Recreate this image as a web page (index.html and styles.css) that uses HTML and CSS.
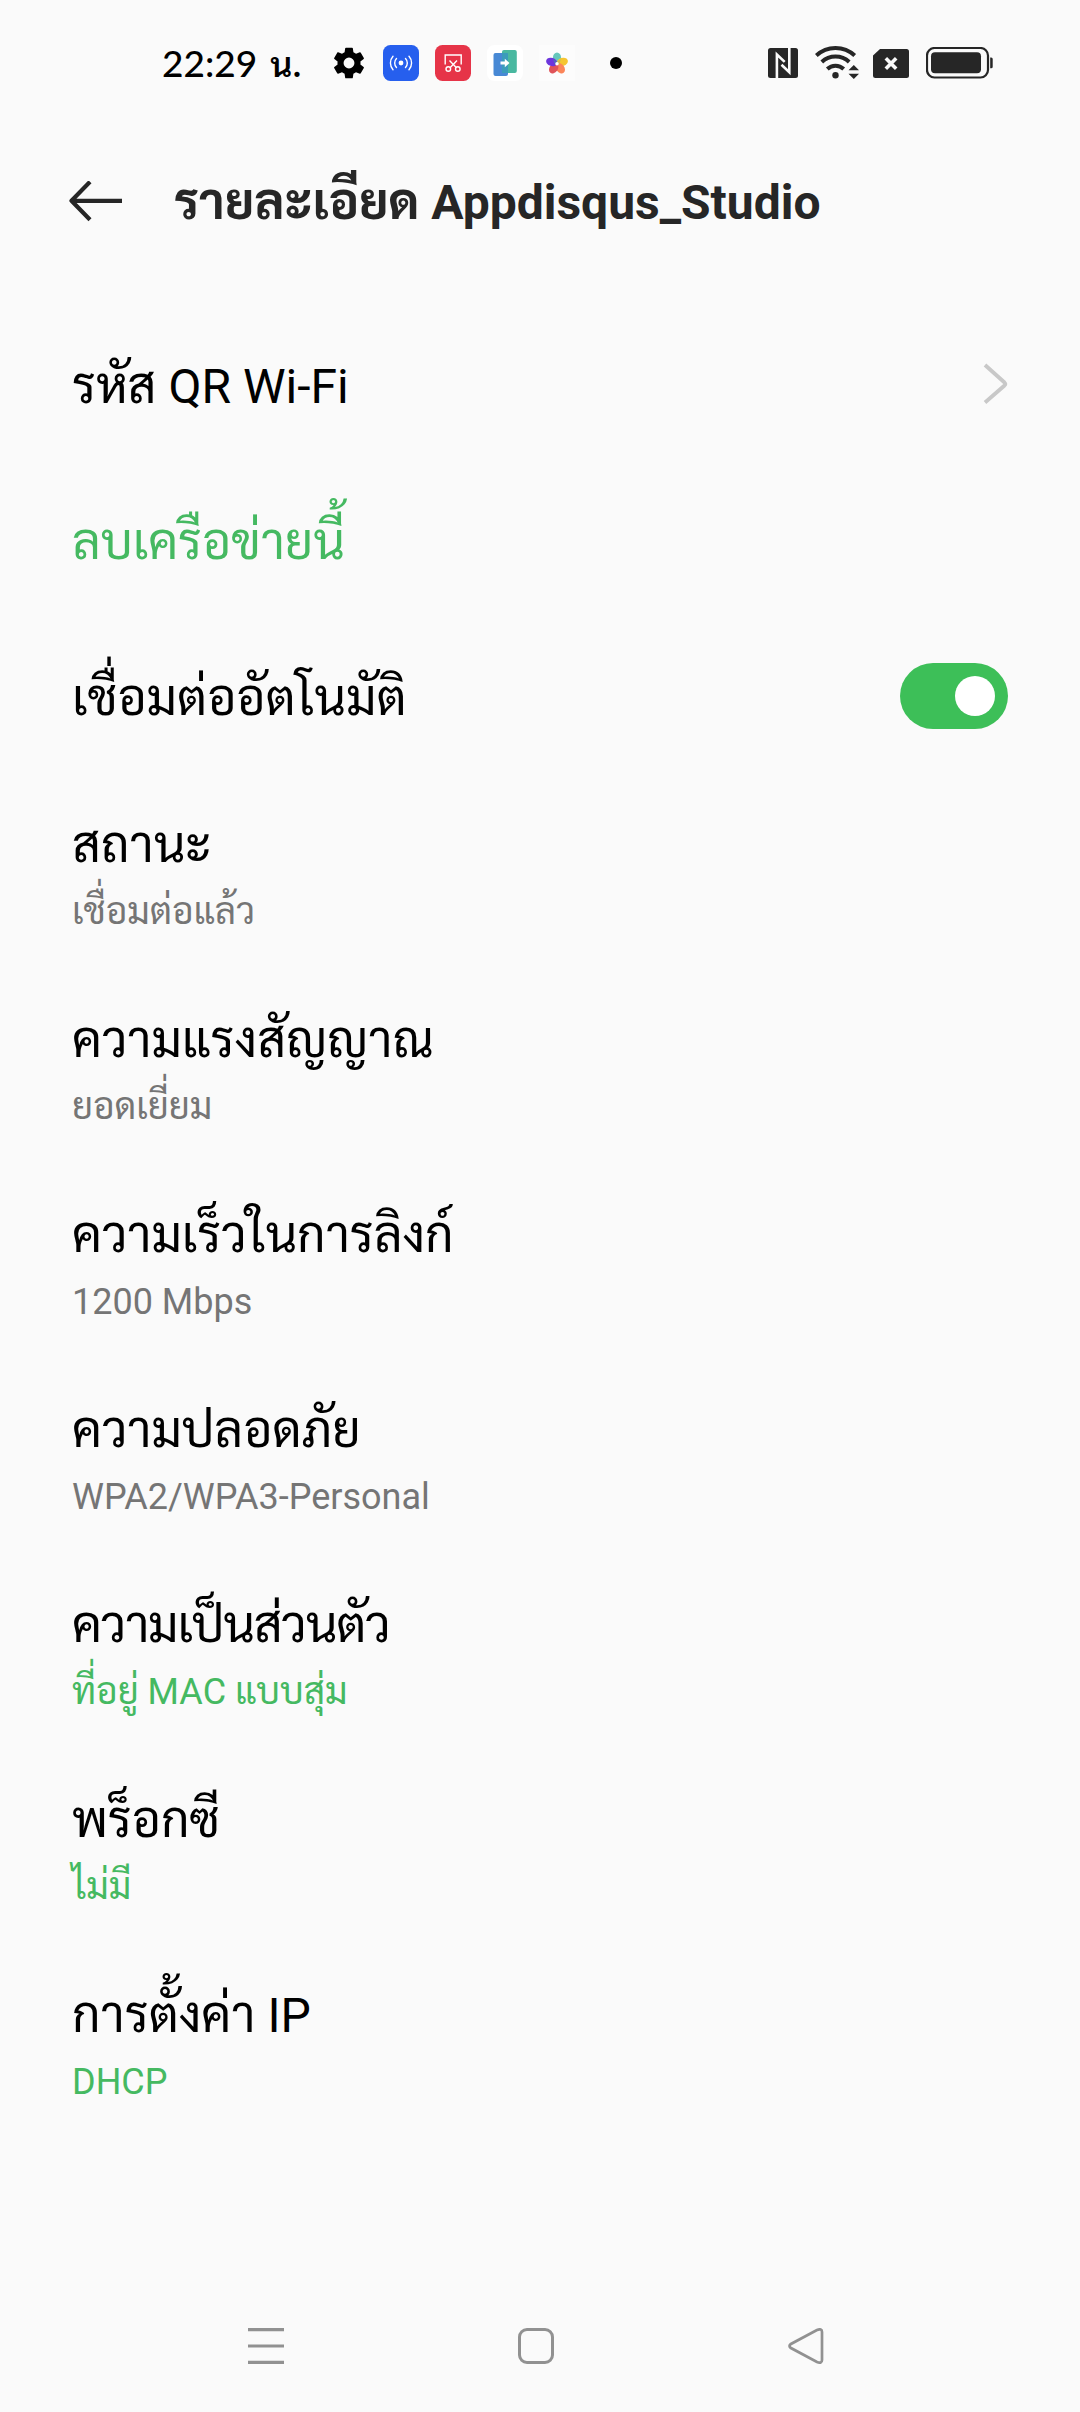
FILE: index.html
```html
<!DOCTYPE html>
<html lang="th">
<head>
<meta charset="utf-8">
<title>รายละเอียด Appdisqus_Studio</title>
<link rel="stylesheet" href="styles.css">
</head>
<body>
<header class="status">
  <div class="clock"><span>22:29</span><span class="unit">น.</span></div>
  <div class="notifications">
    <svg class="gear" width="32" height="32" viewBox="2 2 20 20"><path d="M19.14 12.94c.04-.3.06-.61.06-.94 0-.32-.02-.64-.07-.94l2.03-1.58a.49.49 0 0 0 .12-.61l-1.92-3.32a.488.488 0 0 0-.59-.22l-2.39.96c-.5-.38-1.03-.7-1.62-.94l-.36-2.54a.484.484 0 0 0-.48-.41h-3.84c-.24 0-.43.17-.47.41l-.36 2.54c-.59.24-1.13.57-1.62.94l-2.39-.96c-.22-.08-.47 0-.59.22L2.74 8.87c-.12.21-.08.47.12.61l2.03 1.58c-.05.3-.09.63-.09.94s.02.64.07.94l-2.03 1.58a.49.49 0 0 0-.12.61l1.92 3.32c.12.22.37.29.59.22l2.39-.96c.5.38 1.03.7 1.62.94l.36 2.54c.05.24.24.41.48.41h3.84c.24 0 .44-.17.47-.41l.36-2.54c.59-.24 1.13-.56 1.62-.94l2.39.96c.22.08.47 0 .59-.22l1.92-3.32c.12-.22.07-.47-.12-.61l-2.01-1.58zM12 15.4A3.4 3.4 0 1 1 12 8.6a3.4 3.4 0 0 1 0 6.8z"/></svg>
    <svg width="36" height="36" viewBox="0 0 36 36"><rect width="36" height="36" rx="7.5" fill="#265fee"/><circle cx="18" cy="18" r="2.400" fill="#fff"/><g fill="none" stroke="#fff" stroke-width="1.4" stroke-linecap="round"><path d="M13.500 13.500a6.500 6.500 0 0 0 0 9M22.500 13.500a6.500 6.500 0 0 1 0 9M10 11.300a10 10 0 0 0 0 13.400M26 11.300a10 10 0 0 1 0 13.400"/></g></svg>
    <svg width="36" height="36" viewBox="0 0 36 36"><rect width="36" height="36" rx="7.5" fill="#e63448"/><g fill="none" stroke="#fff" stroke-width="1.4"><path d="M10.200 19.500V10h16v9.500M14.500 15.500l6.700 7M22 15.500l-6.700 7"/><circle cx="13.300" cy="24" r="2.300"/><circle cx="22.800" cy="24" r="2.300"/></g></svg>
    <svg width="36" height="36" viewBox="0 0 36 36"><rect width="36" height="36" rx="7.5" fill="#fff"/><rect x="6.500" y="8" width="14.500" height="23" rx="2" fill="#4889d5"/><rect x="15" y="5" width="14.800" height="23" rx="2" fill="#49b8a0"/><path d="M15 8h6v20h-6z" fill="#3b9cba"/><path d="M13.500 16.500h4.300v-2.800l4.700 4.300-4.700 4.300v-2.800h-4.300z" fill="#fff"/></svg>
    <svg width="36" height="36" viewBox="0 0 36 36"><rect width="36" height="36" fill="#fcfcfc"/><g transform="translate(18 18.700)"><ellipse cy="-5.600" rx="4.100" ry="5.700" fill="#66c7bb"/><ellipse cy="-5.600" rx="4.100" ry="5.700" fill="#f5c531" transform="rotate(72)"/><ellipse cy="-5.600" rx="4.100" ry="5.700" fill="#fb8559" transform="rotate(144)"/><ellipse cy="-5.600" rx="4.100" ry="5.700" fill="#df5359" transform="rotate(216)"/><ellipse cy="-5.600" rx="4.100" ry="5.700" fill="#6c35dc" transform="rotate(288)"/><path d="M-4-4.500 0-2 1 1-2 1z" fill="#5267be"/><path d="M0-2 4-4.500 2 1-1 1z" fill="#c9be52"/><circle r="1.700" fill="#fff"/></g></svg>
    <span class="more"></span>
  </div>
  <div class="system">
    <svg class="nfc" width="30" height="30" viewBox="0 0 30 30"><rect width="30" height="30" rx="2.500" fill="#262626"/><path d="M8.900 30V6.500l7.800 7.400M21.300 0v24.200l-7.800-7.400" fill="none" stroke="#fafafa" stroke-width="2.600"/></svg>
    <svg class="wifi" width="44" height="34" viewBox="0 0 44 34"><g fill="none" stroke="#262626" stroke-width="4"><path d="M1.300 10.500a28 28 0 0 1 38.400 0M6.800 17a20 20 0 0 1 27.400 0M12.300 24a12 12 0 0 1 16.400 0"/></g><circle cx="20.500" cy="30.300" r="3.200" fill="#262626"/><path d="M38.800 17.500 46 27l-7 9-7-9z" fill="#fafafa"/><path d="M33.500 25.200 38.800 20l5.200 5.200zM33.500 28.800l5.300 5.200 5.200-5.200z" fill="#262626"/></svg>
    <svg class="sim" width="36" height="29" viewBox="0 0 36 29"><path d="M7 0h26.500A2.500 2.500 0 0 1 36 2.500v24a2.500 2.500 0 0 1-2.500 2.500h-31A2.500 2.500 0 0 1 0 26.500V6.500z" fill="#262626"/><path d="m12.800 9.300 10.400 10.400m0-10.400L12.800 19.700" stroke="#fafafa" stroke-width="3.600"/></svg>
    <svg class="battery" width="67" height="32" viewBox="0 0 67 32"><rect x="1" y="1" width="61" height="29.500" rx="7.500" fill="#fafafa" stroke="#262626" stroke-width="2.200"/><rect x="5" y="5.200" width="50" height="21" rx="4" fill="#262626"/><path d="M64.200 10.500h1a1.600 1.600 0 0 1 1.500 1.600v7.600a1.600 1.600 0 0 1-1.500 1.600h-1z" fill="#262626"/></svg>
  </div>
</header>
<nav class="appbar">
  <svg width="54" height="42" viewBox="0 1 54 42"><path d="M21 1.800 2.500 20.800 21 39.800M2.500 20.800H53" fill="none" stroke="#262626" stroke-width="4.200" stroke-linejoin="round"/></svg>
  <h1 class="heading"><span class="thai">รายละเอียด </span>Appdisqus_Studio</h1>
</nav>
<main class="settings">
  <div class="row"><span class="label"><span class="thai">รหัส </span>QR Wi-Fi</span><svg class="chevron" width="25" height="42" viewBox="0 0 25 42"><path d="M2 2 21.500 19.500q1.500 1.500 0 3L2 39.500" fill="none" stroke="#c8c8c8" stroke-width="3.800"/></svg></div>
  <div class="row"><span class="label action"><span class="thai">ลบเครือข่ายนี้</span></span></div>
  <div class="row"><span class="label"><span class="thai">เชื่อมต่ออัตโนมัติ</span></span><span class="switch"><span class="knob"></span></span></div>
  <div class="item"><div class="label"><span class="thai">สถานะ</span></div><div class="value"><span class="thai">เชื่อมต่อแล้ว</span></div></div>
  <div class="item"><div class="label"><span class="thai">ความแรงสัญญาณ</span></div><div class="value"><span class="thai">ยอดเยี่ยม</span></div></div>
  <div class="item"><div class="label"><span class="thai">ความเร็วในการลิงก์</span></div><div class="value">1200 Mbps</div></div>
  <div class="item"><div class="label"><span class="thai">ความปลอดภัย</span></div><div class="value">WPA2/WPA3-Personal</div></div>
  <div class="item"><div class="label"><span class="thai tight">ความเป็นส่วนตัว</span></div><div class="value action"><span class="thai">ที่อยู่ </span>MAC<span class="thai"> แบบสุ่ม</span></div></div>
  <div class="item"><div class="label"><span class="thai">พร็อกซี</span></div><div class="value action"><span class="thai">ไม่มี</span></div></div>
  <div class="item"><div class="label"><span class="thai">การตั้งค่า </span>IP</div><div class="value action">DHCP</div></div>
</main>
<footer class="navbar">
  <svg width="36" height="36" viewBox="0 0 36 36"><path d="M0 1.700h36M0 18h36M0 34.300h36" stroke="#919191" stroke-width="3.200"/></svg>
  <svg width="36" height="36" viewBox="0 0 36 36"><rect x="1.500" y="1.500" width="33" height="33" rx="7.500" fill="none" stroke="#919191" stroke-width="3"/></svg>
  <svg width="36" height="36" viewBox="0 0 36 36"><path d="M2.500 16.200Q.5 18 2.500 19.800L29 34q5 2 5-2V4q0-4-5-2z" fill="none" stroke="#919191" stroke-width="2.700"/></svg>
</footer>
</body>
</html>
```
FILE: styles.css
```css
* { box-sizing: border-box; }
body { margin: 0; width: 1080px; height: 2412px; display: flex; flex-direction: column; background: #fafafa; color: #000; font-family: Roboto, Sarabun, "Noto Sans Thai Looped", sans-serif; overflow: hidden; }
svg { display: block; flex: none; }
.thai { font-family: Sarabun, "Noto Sans Thai Looped", sans-serif; font-size: 1.034em; line-height: 1; white-space: pre; }
.tight { letter-spacing: -1.1px; }

.status { height: 126px; display: flex; align-items: center; padding: 0 87px 0 162px; }
.clock { display: flex; align-items: baseline; gap: 13px; width: 171px; font: 500 37px/50px Lato, sans-serif; }
.unit { font-family: Sarabun, "Noto Sans Thai Looped", sans-serif; font-weight: 600; font-size: 34px; }
.notifications { display: flex; align-items: center; gap: 16px; }
.gear { margin-right: 2px; }
.more { width: 12px; height: 12px; margin-left: 19px; border-radius: 50%; background: #000; }
.system { display: flex; align-items: center; margin-left: auto; }
.wifi { margin: 0 14px 2px 17px; }
.battery { margin-left: 17px; }

.appbar { height: 181px; display: flex; align-items: center; gap: 51px; padding: 46px 69px 75px; }
.heading { margin: 0; padding-top: 1px; font-size: 48px; line-height: 60px; font-weight: 700; color: #262626; white-space: nowrap; }
.heading .thai { font-size: 1.05em; }

.row { height: 156px; display: flex; align-items: center; justify-content: space-between; padding: 0 72px; }
.row .label { margin-top: 3px; }
.item { height: 195px; padding: 41px 72px 0; }
.label { font-size: 48px; line-height: 60px; white-space: nowrap; }
.value { margin-top: 11px; font-size: 36px; line-height: 50px; color: #757575; white-space: nowrap; }
.value .thai { font-size: 1.02em; }
.label.action, .value.action { color: #45b961; }
.chevron { margin-bottom: 2px; }
.switch { width: 108px; height: 66px; margin-bottom: 2px; padding: 13px; display: flex; justify-content: flex-end; border-radius: 33px; background: #3dbf58; }
.knob { width: 40px; height: 40px; border-radius: 50%; background: #fff; }

.navbar { height: 132px; margin-top: auto; display: flex; align-items: center; gap: 234px; padding-left: 248px; }
```
